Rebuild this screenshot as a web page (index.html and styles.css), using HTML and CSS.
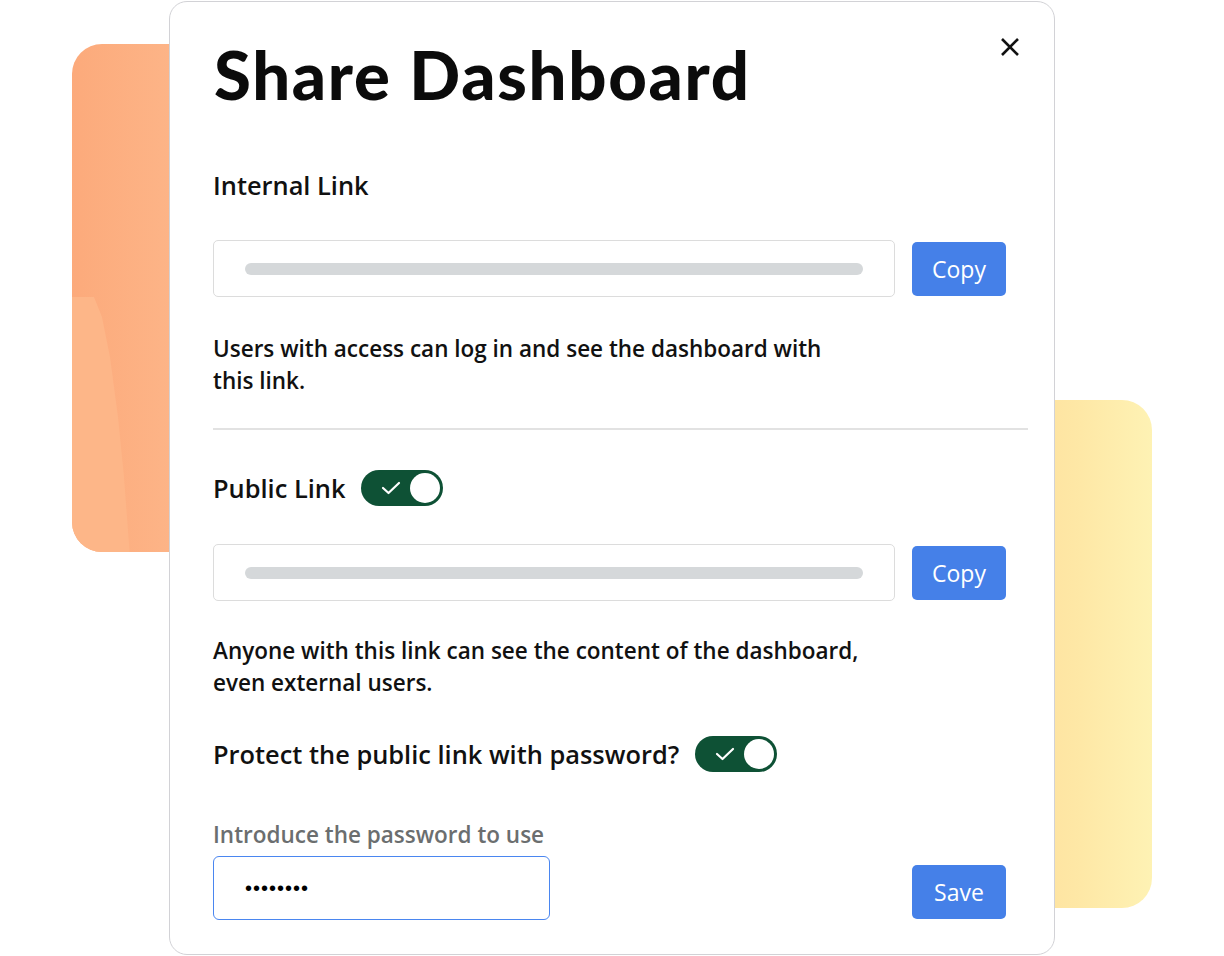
FILE: index.html
```html
<!DOCTYPE html>
<html lang="en">
<head>
    <meta charset="UTF-8">
    <meta name="viewport" content="width=device-width, initial-scale=1.0">
    <title>Share Dashboard</title>
    <link rel="stylesheet" href="styles.css">
</head>
<body>
    <div class="stage">
        <div class="deco deco-orange"><div class="deco-shade"></div></div>
        <div class="deco deco-yellow"></div>

        <div class="modal">
            <button class="close" aria-label="Close">
                <svg width="20" height="20" viewBox="0 0 20 20">
                    <path d="M2 2 L18 18 M18 2 L2 18" stroke="#111" stroke-width="2.6" fill="none"/>
                </svg>
            </button>

            <h1 class="title">Share Dashboard</h1>

            <h2 class="label label-internal">Internal Link</h2>
            <div class="link-row">
                <div class="link-box"><span class="link-bar"></span></div>
                <button class="btn">Copy</button>
            </div>
            <p class="hint">Users with access can log in and see the dashboard with<br>this link.</p>

            <hr class="divider">

            <div class="label-row label-public">
                <h2 class="label">Public Link</h2>
                <span class="toggle on">
                    <svg class="check" width="20" height="16" viewBox="0 0 20 16">
                        <path d="M2 8 L7.5 13 L18 3" stroke="#fff" stroke-width="2.2" fill="none" stroke-linecap="round" stroke-linejoin="round"/>
                    </svg>
                    <span class="knob"></span>
                </span>
            </div>
            <div class="link-row link-row-public">
                <div class="link-box"><span class="link-bar"></span></div>
                <button class="btn">Copy</button>
            </div>
            <p class="hint hint-public">Anyone with this link can see the content of the dashboard,<br>even external users.</p>

            <div class="label-row label-protect">
                <h2 class="label">Protect the public link with password?</h2>
                <span class="toggle on">
                    <svg class="check" width="20" height="16" viewBox="0 0 20 16">
                        <path d="M2 8 L7.5 13 L18 3" stroke="#fff" stroke-width="2.2" fill="none" stroke-linecap="round" stroke-linejoin="round"/>
                    </svg>
                    <span class="knob"></span>
                </span>
            </div>

            <div class="password-row">
                <div class="password-field">
                    <label class="field-label" for="pwd">Introduce the password to use</label>
                    <input class="password-input" id="pwd" type="password" value="12345678">
                </div>
                <button class="btn btn-save">Save</button>
            </div>
        </div>
    </div>
</body>
</html>
```

FILE: styles.css
```css
* {
    box-sizing: border-box;
}
body {
    margin: 0;
    background-color: #ffffff;
    font-family: "Open Sans", "Noto Sans", Arial, sans-serif;
    color: #111;
}
.stage {
    position: relative;
    width: 1224px;
    height: 956px;
    padding-top: 1px;
    padding-left: 169px;
}

/* decorative cards behind the dialog */
.deco {
    position: absolute;
    border-radius: 30px;
    overflow: hidden;
}
.deco-orange {
    left: 72px;
    top: 44px;
    width: 140px;
    height: 508px;
    background: linear-gradient(90deg, #fcaa7b 0%, #fdb487 70%, #feb98b 100%);
}
.deco-shade {
    position: absolute;
    left: 0;
    top: 253px;
    width: 70px;
    height: 260px;
    background-color: #fdb688;
    clip-path: polygon(0 0, 22px 0, 30px 20px, 38px 60px, 46px 120px, 52px 180px, 58px 260px, 0 260px);
}
.deco-yellow {
    left: 1010px;
    top: 400px;
    width: 142px;
    height: 508px;
    background: linear-gradient(90deg, #fedf9c 0%, #fee8a6 50%, #fef2b4 100%);
}

.modal {
    position: relative;
    width: 886px;
    height: 954px;
    background-color: #ffffff;
    border: 1.5px solid #d2d2d6;
    border-radius: 18px;
    padding: 0 26px 0 43px;
}
.close {
    position: absolute;
    top: 35px;
    right: 34px;
    width: 20px;
    height: 20px;
    padding: 0;
    border: none;
    background: none;
    cursor: pointer;
}
.title {
    margin: 32px 0 0 1px;
    font-family: Lato, "Open Sans", sans-serif;
    font-size: 67px;
    line-height: 80px;
    font-weight: 900;
    letter-spacing: 1.7px;
    color: #0b0b0b;
}

.label {
    margin: 0;
    font-size: 25.4px;
    font-weight: 600;
    line-height: 32px;
}
.label-internal {
    margin-top: 55px;
}
.label-row {
    display: flex;
    align-items: center;
    gap: 16px;
}
.label-public {
    margin-top: 40px;
}
.label-protect {
    margin-top: 37px;
}

.link-row {
    display: flex;
    align-items: center;
    gap: 17px;
    width: 793px;
    margin-top: 39px;
}
.link-row-public {
    margin-top: 38px;
}
.link-box {
    flex: 1;
    height: 57px;
    border: 1.5px solid #dcdcdc;
    border-radius: 5px;
    display: flex;
    align-items: center;
    padding: 0 31px;
}
.link-bar {
    display: block;
    width: 100%;
    height: 12px;
    border-radius: 6px;
    background-color: #d5d8da;
}

.btn {
    width: 94px;
    height: 54px;
    border: none;
    border-radius: 5px;
    background-color: #4580e8;
    color: #ffffff;
    font-family: "Open Sans", "Noto Sans", Arial, sans-serif;
    font-size: 23px;
    font-weight: 400;
    cursor: pointer;
}

.hint {
    margin: 36px 0 0 0;
    font-size: 22.5px;
    font-weight: 600;
    line-height: 32px;
}
.hint-public {
    margin-top: 34px;
}

.divider {
    width: 815px;
    margin: 31px 0 0 0;
    border: none;
    height: 2px;
    background-color: #e2e2e2;
}

.toggle {
    position: relative;
    display: inline-block;
    width: 82px;
    height: 36px;
    border-radius: 18px;
    background-color: #0e5135;
}
.toggle .check {
    position: absolute;
    left: 20px;
    top: 10px;
}
.toggle .knob {
    position: absolute;
    right: 3px;
    top: 3px;
    width: 30px;
    height: 30px;
    border-radius: 50%;
    background-color: #ffffff;
}

.password-row {
    display: flex;
    align-items: flex-end;
    justify-content: space-between;
    width: 793px;
    margin-top: 47px;
}
.field-label {
    display: block;
    font-size: 22.5px;
    font-weight: 600;
    color: #6b6e6f;
    line-height: 32px;
}
.password-input {
    display: block;
    margin-top: 5px;
    width: 337px;
    height: 64px;
    border: 1.5px solid #4a86f0;
    border-radius: 6px;
    padding: 0 31px;
    font-size: 20px;
    letter-spacing: 1px;
    outline: none;
}
.btn-save {
    margin-bottom: 1px;
}
```
